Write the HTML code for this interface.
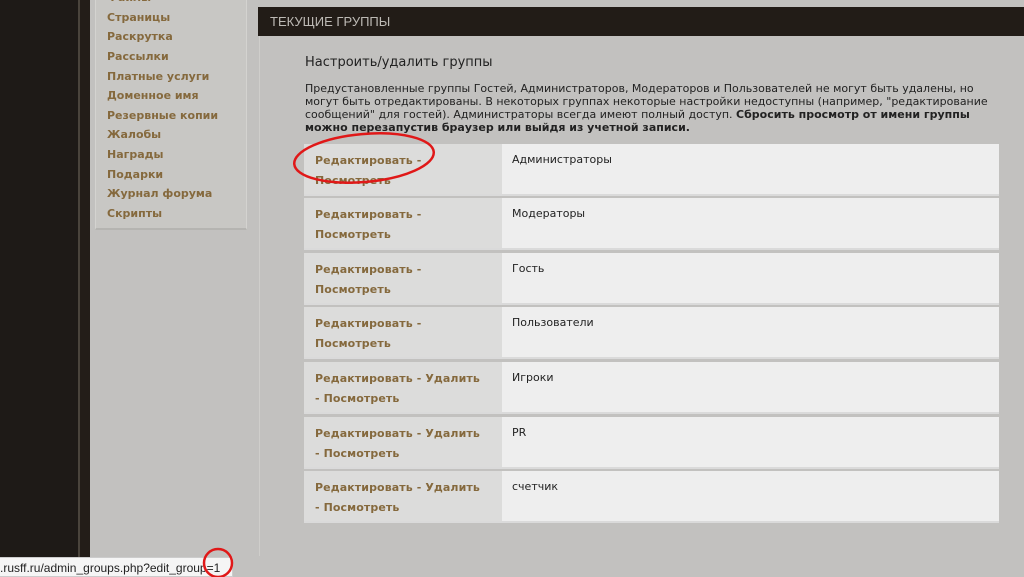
<!DOCTYPE html>
<html><head><meta charset="utf-8"><style>
*{margin:0;padding:0;box-sizing:border-box}
body{width:1024px;height:577px;overflow:hidden;background:#1e1a17;font-family:"DejaVu Sans","Liberation Sans",sans-serif;position:relative}
.strip{position:absolute;left:78px;top:0;width:2px;height:577px;background:#4a443c}
.strip2{position:absolute;left:80px;top:0;width:10px;height:577px;background:#231d18}
.panel{position:absolute;left:90px;top:0;width:168px;height:577px;background:#c2c1bf}
.side{position:absolute;left:95px;top:-10px;width:152px;height:240px;background:#c8c7c4;border:1px solid #d4d3d0;border-top:none;border-bottom:2px solid #b5b4b1}
.side a{display:block;position:absolute;left:11px;font-size:11px;font-weight:bold;color:#85693d;text-decoration:none;white-space:nowrap}
.main{position:absolute;left:258px;top:0;width:766px;height:577px;background:#c2c1bf}
.vline{position:absolute;left:259px;top:36px;width:1px;height:520px;background:#cfcecb}
.hdr{position:absolute;left:258px;top:7px;width:766px;height:29px;background:#221c17;color:#bdbab5;font-size:13px;line-height:29px;padding-left:12px;font-family:"Liberation Sans",sans-serif}
h2{position:absolute;left:305px;top:55px;font-size:13px;font-weight:normal;color:#222}
.desc{position:absolute;left:305px;top:82px;width:700px;font-size:11px;line-height:13px;color:#222}
.row{position:absolute;left:304px;width:695px;height:52px;background:#eeeeee;border-bottom:2px solid #dadada}
.row .l{position:absolute;left:0;top:0;width:198px;height:100%;background:#dcdcdb;padding:7px 0 0 11px;font-size:11px;font-weight:bold;line-height:20px;color:#85693d;letter-spacing:0.1px}
.row .r{position:absolute;left:208px;top:9px;font-size:11px;color:#222}
.status{position:absolute;left:0;top:557px;width:233px;height:20px;background:#f5f5f5;border:1px solid #ccc;border-left:none;font-size:12px;line-height:20px;color:#222;font-family:"Liberation Sans",sans-serif;white-space:nowrap;overflow:hidden}
</style></head><body>
<div class="strip"></div><div class="strip2"></div>
<div class="panel"></div>
<div class="side">
<a style="top:1px">Файлы</a>
<a style="top:21px">Страницы</a>
<a style="top:40px">Раскрутка</a>
<a style="top:60px">Рассылки</a>
<a style="top:80px">Платные услуги</a>
<a style="top:99px">Доменное имя</a>
<a style="top:119px">Резервные копии</a>
<a style="top:138px">Жалобы</a>
<a style="top:158px">Награды</a>
<a style="top:178px">Подарки</a>
<a style="top:197px">Журнал форума</a>
<a style="top:217px">Скрипты</a>
</div>
<div class="main"></div>
<div class="vline"></div>
<div class="hdr">ТЕКУЩИЕ ГРУППЫ</div>
<h2>Настроить/удалить группы</h2>
<div class="desc">Предустановленные группы Гостей, Администраторов, Модераторов и Пользователей не могут быть удалены, но могут быть отредактированы. В некоторых группах некоторые настройки недоступны (например, "редактирование сообщений" для гостей). Администраторы всегда имеют полный доступ. <b>Сбросить просмотр от имени группы можно перезапустив браузер или выйдя из учетной записи.</b></div>
<div class="row" style="top:144px"><div class="l">Редактировать -<br>Посмотреть</div><div class="r">Администраторы</div></div>
<div class="row" style="top:198px"><div class="l">Редактировать -<br>Посмотреть</div><div class="r">Модераторы</div></div>
<div class="row" style="top:253px"><div class="l">Редактировать -<br>Посмотреть</div><div class="r">Гость</div></div>
<div class="row" style="top:307px"><div class="l">Редактировать -<br>Посмотреть</div><div class="r">Пользователи</div></div>
<div class="row" style="top:362px"><div class="l">Редактировать - Удалить<br>- Посмотреть</div><div class="r">Игроки</div></div>
<div class="row" style="top:417px"><div class="l">Редактировать - Удалить<br>- Посмотреть</div><div class="r">PR</div></div>
<div class="row" style="top:471px"><div class="l">Редактировать - Удалить<br>- Посмотреть</div><div class="r">счетчик</div></div>
<div class="status">.rusff.ru/admin_groups.php?edit_group=1</div>
<svg style="position:absolute;left:0;top:0" width="1024" height="577">
<ellipse cx="364" cy="158" rx="70" ry="24" fill="none" stroke="#e01818" stroke-width="2.5" transform="rotate(-5 364 158)"/>
<circle cx="218" cy="563" r="14" fill="none" stroke="#e01818" stroke-width="2.5"/>
</svg>
</body></html>
